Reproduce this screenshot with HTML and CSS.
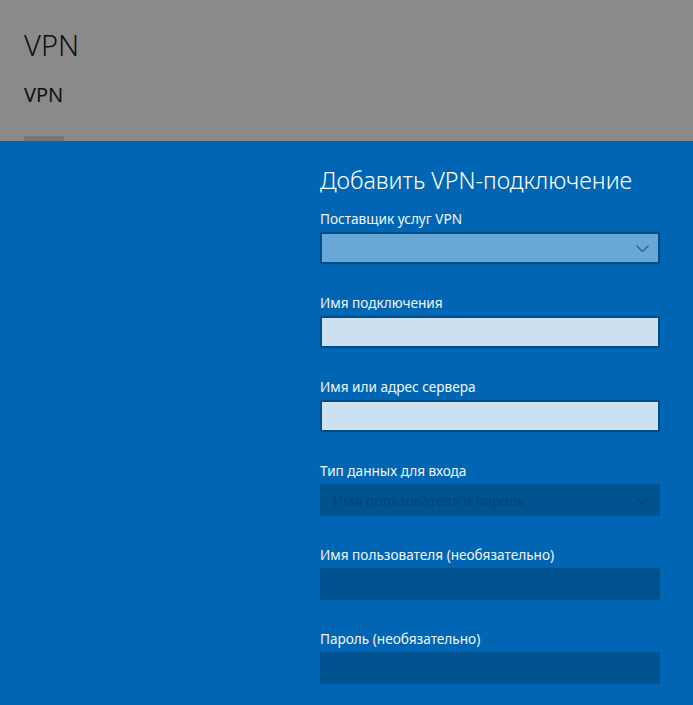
FILE: index.html
```html
<!doctype html>
<html lang="ru">
<head>
    <meta charset="UTF-8">
    <title>VPN</title>
    <link rel="stylesheet" href="styles.css">
</head>
<body>
<div id="page">
    <div id="header">
        <h1 class="page-title">VPN</h1>
        <h2 class="page-sub">VPN</h2>
        <div class="add-btn"></div>
    </div>
    <div id="dialog">
        <div class="form">
            <h3 class="form-title">Добавить VPN-подключение</h3>
            <div class="field">
                <label class="label">Поставщик услуг VPN</label>
                <div class="select">
                    <span class="select-text"></span>
                    <svg class="chevron" width="13" height="7" viewBox="0 0 13 7"><path d="M0.5 0.5l6 6 6-6" fill="none" stroke="currentColor" stroke-width="1.2"/></svg>
                </div>
            </div>
            <div class="field">
                <label class="label">Имя подключения</label>
                <div class="input"></div>
            </div>
            <div class="field">
                <label class="label">Имя или адрес сервера</label>
                <div class="input"></div>
            </div>
            <div class="field">
                <label class="label">Тип данных для входа</label>
                <div class="select disabled">
                    <span class="select-text">Имя пользователя и пароль</span>
                    <svg class="chevron" width="13" height="7" viewBox="0 0 13 7"><path d="M0.5 0.5l6 6 6-6" fill="none" stroke="currentColor" stroke-width="1.2"/></svg>
                </div>
            </div>
            <div class="field">
                <label class="label">Имя пользователя (необязательно)</label>
                <div class="input disabled"></div>
            </div>
            <div class="field">
                <label class="label">Пароль (необязательно)</label>
                <div class="input disabled"></div>
            </div>
        </div>
    </div>
</div>
</body>
</html>
```

FILE: styles.css
```css
*{
    margin: 0;
    padding: 0;
    box-sizing: border-box;
}
html,body{
    height: 100%;
    overflow: hidden;
}
body{
    font-family: "Noto Sans", "Open Sans", sans-serif;
    background: #0066b3;
}
#page{
    display: flex;
    flex-direction: column;
    height: 100%;
}
#header{
    background: #8a8a8a;
    height: 141px;
    padding: 28px 24px 0;
    display: flex;
    flex-direction: column;
    color: #111;
}
.page-title{
    font-size: 29px;
    font-weight: 300;
    line-height: 34px;
}
.page-sub{
    font-size: 20px;
    font-weight: 400;
    line-height: 26px;
    margin-top: 20px;
}
.add-btn{
    margin-top: auto;
    width: 40px;
    height: 5px;
    background: #777;
}
#dialog{
    flex: 1;
    background: #0066b3;
    padding: 24px 33px 0 320px;
}
.form-title{
    font-size: 23.3px;
    font-weight: 300;
    color: #fff;
    line-height: 30px;
}
.field{
    display: flex;
    flex-direction: column;
}
.label{
    font-size: 13.6px;
    color: #f2f6fa;
    line-height: 20px;
    margin-top: 14px;
    margin-bottom: 3px;
}
.field + .field .label{
    margin-top: 29px;
}
.select,.input{
    height: 32px;
    border: 2px solid #004e88;
    display: flex;
    align-items: center;
    padding: 0 9px 0 11px;
}
.select{
    background: #68a7d6;
    color: #2d5f86;
}
.input{
    background: #cce0f0;
}
.select-text{
    flex: 1;
    font-size: 14px;
}
.select.disabled,.input.disabled{
    border-color: #00538f;
    background: #00538f;
    color: #00447a;
}
```
